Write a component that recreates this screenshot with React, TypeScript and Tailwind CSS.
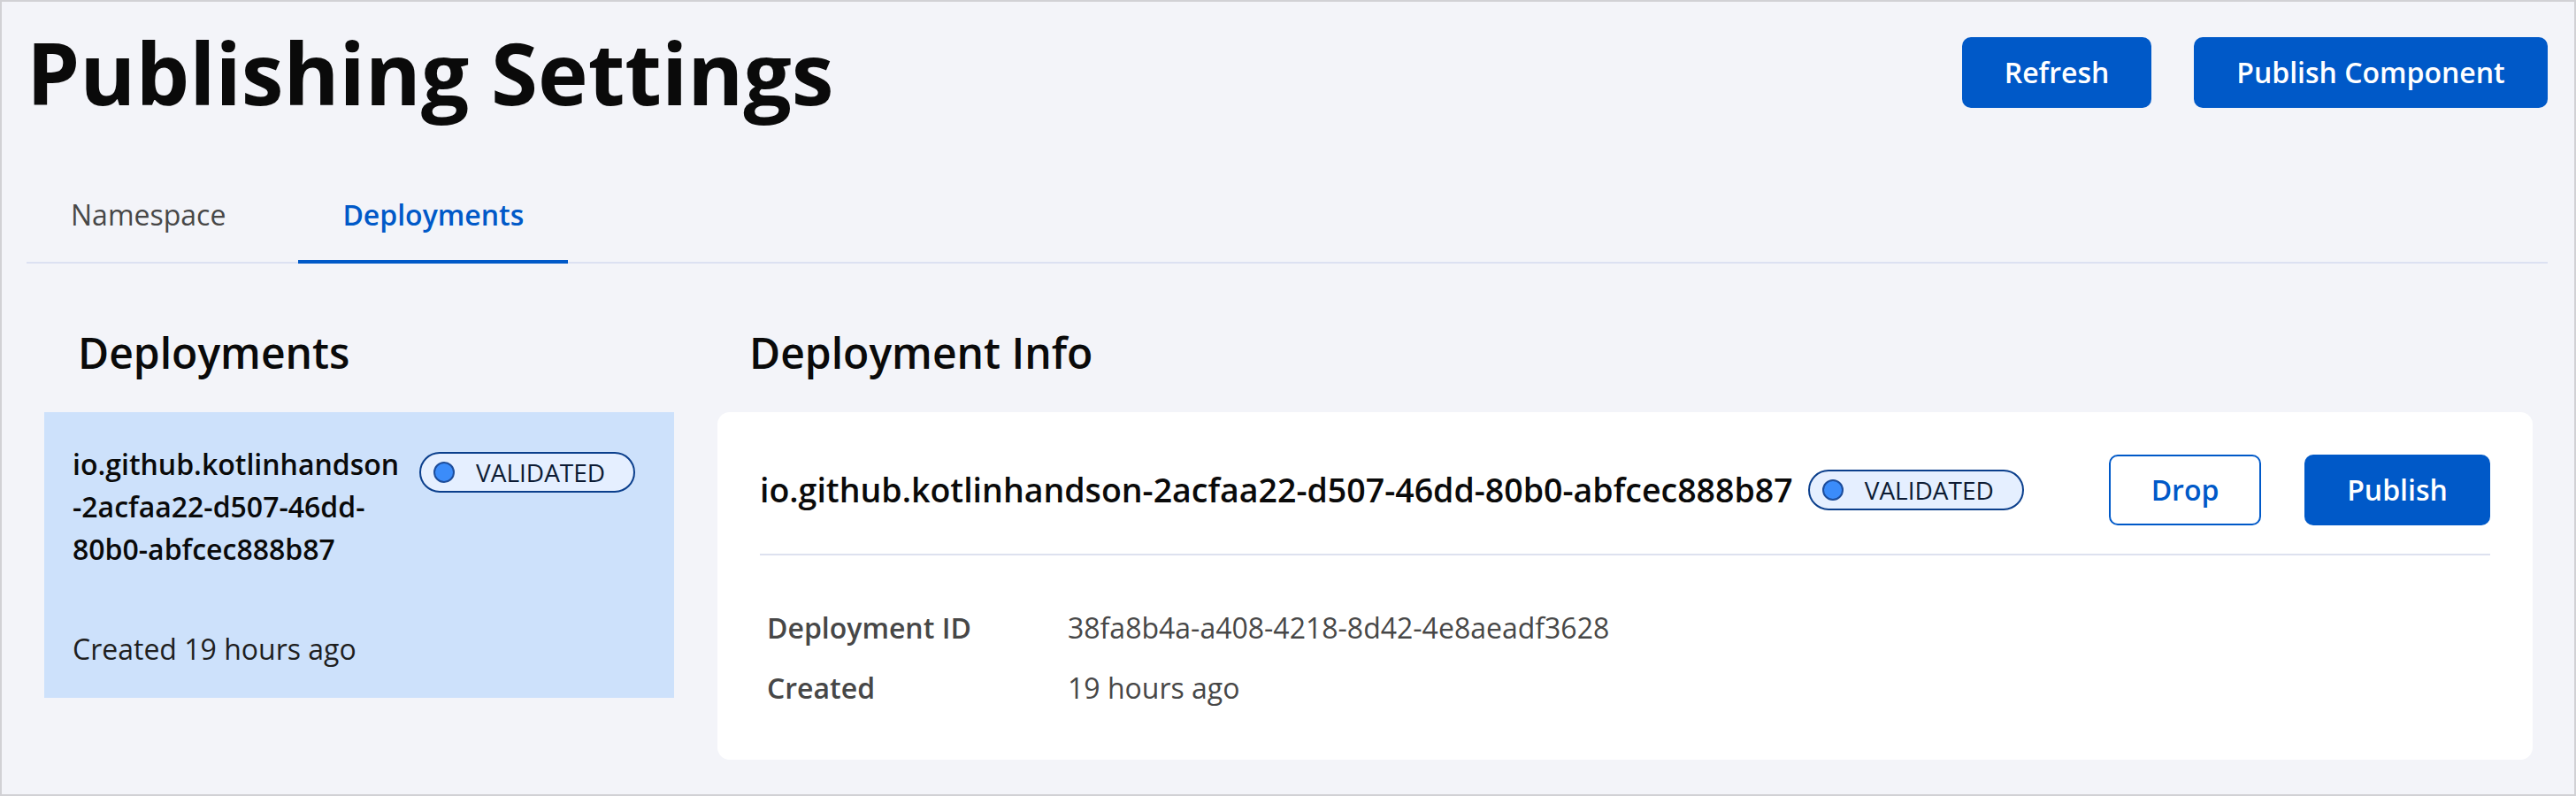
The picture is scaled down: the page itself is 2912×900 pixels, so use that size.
import React from 'react'

function Badge() {
  return (
    <span className="inline-flex h-[46px] shrink-0 items-center gap-[24px] rounded-full border-2 border-[#0b3f8c] bg-[#e5efff] pl-[14px] pr-[32px] text-[28px] leading-[42px] text-[#0d1b33]">
      <span className="h-[24px] w-[24px] rounded-full border-2 border-[#1d4d9b] bg-[#3b8cfa]" />
      VALIDATED
    </span>
  )
}

export default function App() {
  const name = 'io.github.kotlinhandson-2acfaa22-d507-46dd-80b0-abfcec888b87'

  return (
    <div className="h-[900px] w-[2912px] overflow-hidden border-2 border-[#d1d1d5] bg-[#f3f4f9] pl-[28px] pr-[30px] font-['Open_Sans',sans-serif] text-[#0a0a0a]">
      {/* Header */}
      <div className="flex items-center justify-between pt-[40px]">
        <h1 className="text-[96px] font-bold leading-[80px]">Publishing Settings</h1>
        <div className="flex items-center gap-[48px]">
          <button className="h-[80px] w-[214px] rounded-[10px] bg-[#0059c8] text-[32px] font-semibold text-white">
            Refresh
          </button>
          <button className="h-[80px] w-[400px] rounded-[10px] bg-[#0059c8] text-[32px] font-semibold text-white">
            Publish Component
          </button>
        </div>
      </div>

      {/* Tabs */}
      <div className="mt-[97px] flex gap-[32px] border-b-2 border-[#dce1f2]">
        <button className="-mb-[2px] border-b-4 border-transparent px-[50px] pb-[27px] text-[32px] leading-[48px] text-[#474747]">
          Namespace
        </button>
        <button className="-mb-[2px] border-b-4 border-[#0059c8] px-[50px] pb-[27px] text-[32px] font-semibold leading-[48px] text-[#0059c8]">
          Deployments
        </button>
      </div>

      {/* Content */}
      <div className="flex gap-[49px] pl-[20px] pr-[17px]">
        {/* Deployment list */}
        <div className="w-[712px] shrink-0">
          <h2 className="mb-[35px] mt-[69px] pl-[38px] text-[48px] font-semibold leading-[64px]">Deployments</h2>
          <div className="bg-[#cde1fb] px-[32px] pb-[31px] pt-[35px]">
            <div className="flex items-start gap-[20px]">
              <div className="w-[372px] text-[32px] font-semibold leading-[48px] [overflow-wrap:anywhere]">{name}</div>
              <div className="mt-[10px]">
                <Badge />
              </div>
            </div>
            <div className="mt-[65px] text-[32px] leading-[48px] text-[#1f1f1f]">Created 19 hours ago</div>
          </div>
        </div>

        {/* Deployment info */}
        <div className="min-w-0 flex-1">
          <h2 className="mb-[35px] mt-[69px] pl-[36px] text-[48px] font-semibold leading-[64px]">Deployment Info</h2>
          <div className="rounded-[14px] bg-white px-[48px]">
            <div className="flex items-center justify-between border-b-2 border-[#dde1ef] pb-[32px] pt-[48px]">
              <div className="flex items-center gap-[17px]">
                <span className="text-[37.5px] font-semibold leading-[48px]">{name}</span>
                <Badge />
              </div>
              <div className="flex items-center gap-[49px]">
                <button className="h-[80px] w-[172px] rounded-[10px] border-2 border-[#0059c8] bg-white text-[32px] font-semibold text-[#0059c8]">
                  Drop
                </button>
                <button className="h-[80px] w-[210px] rounded-[10px] bg-[#0059c8] text-[32px] font-semibold text-white">
                  Publish
                </button>
              </div>
            </div>
            <div className="grid grid-cols-[340px_1fr] gap-y-[20px] pb-[57px] pl-[8px] pt-[58px] text-[32px] leading-[48px] text-[#474747]">
              <div className="font-semibold">Deployment ID</div>
              <div>38fa8b4a-a408-4218-8d42-4e8aeadf3628</div>
              <div className="font-semibold">Created</div>
              <div>19 hours ago</div>
            </div>
          </div>
        </div>
      </div>
    </div>
  )
}
